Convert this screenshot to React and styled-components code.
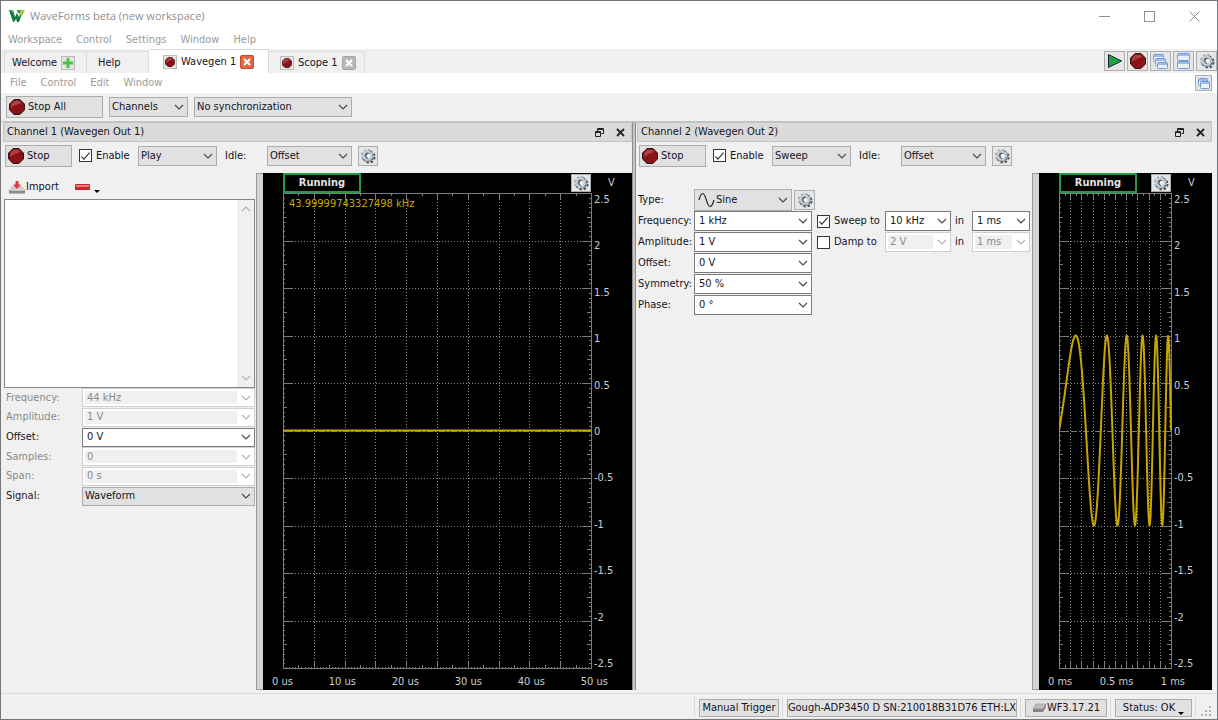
import React, { useId, useLayoutEffect, useRef, useState } from 'react';
import styled, { createGlobalStyle, css } from 'styled-components';

const GlobalStyle = createGlobalStyle`
  *, *::before, *::after { box-sizing: border-box; }
  html, body { margin: 0; background: #f0f0f0; }
  body, button, select, input {
    font-family: 'DejaVu Sans Condensed', 'DejaVu Sans', Tahoma, sans-serif;
    font-size: 11px;
    line-height: 14px;
    color: #14141c;
  }
  svg { display: block; flex: none; }
`;

/* ---------- window frame ---------- */

const Window = styled.div`
  display: flex;
  flex-direction: column;
  min-height: 100vh;
  border: 1px solid #74787b;
  background: #f0f0f0;
`;

const TitleBar = styled.header`
  display: flex;
  align-items: center;
  gap: 5px;
  height: 30px;
  padding: 0 17px 0 8px;
  background: #fff;
  color: #8f8f8f;
`;

const Title = styled.h1`
  flex: 1;
  margin: 0;
  font: 400 11px/16px 'Open Sans', 'Noto Sans', sans-serif;
`;

const WindowButtons = styled.div`
  display: flex;
  gap: 34px;
`;

const BareButton = styled.button`
  display: flex;
  align-items: center;
  padding: 0;
  border: 0;
  background: none;
`;

const MenuBar = styled.nav`
  display: flex;
  align-items: center;
  gap: 14px;
  flex: 1;
  height: ${(p) => p.$h}px;
  padding-left: ${(p) => p.$indent}px;
`;

const MenuItem = styled.button`
  padding: 0;
  border: 0;
  background: none;
  color: #9c9c9c;
`;

const MenuStrip = styled.div`
  display: flex;
  align-items: center;
  padding-right: 5px;
  background: #fff;
`;

const TabBar = styled.div`
  display: flex;
  align-items: flex-end;
  height: 24px;
  padding-left: 3px;
`;

const Tabs = styled.div`
  display: flex;
  align-items: flex-end;
  flex: 1;
`;

const Tab = styled.div`
  display: flex;
  align-items: center;
  gap: 4px;
  width: ${(p) => p.$width}px;
  height: ${(p) => (p.$active ? 24 : 22)}px;
  padding-left: ${(p) => p.$pad}px;
  border: 1px solid #dcdcdc;
  border-bottom: 0;
  border-left-width: ${(p) => (p.$first ? 1 : 0)}px;
  background: ${(p) => (p.$active ? '#fff' : '#f0f0f0')};
`;

const TabLabel = styled.button`
  padding: 0;
  border: 0;
  background: none;
`;

const IconFrame = styled.span`
  display: flex;
  align-items: center;
  justify-content: center;
  width: 14px;
  height: 14px;
  border: 1px solid #bcbcbc;
  background: #e6e6e6;
`;

const TabClose = styled.button`
  display: flex;
  align-items: center;
  justify-content: center;
  width: 14px;
  height: 14px;
  padding: 0;
  border: 1px solid ${(p) => (p.$active ? '#c9442a' : '#a4a4a4')};
  border-radius: 2px;
  background: ${(p) => (p.$active ? '#e4683f' : '#b9b9b9')};
`;

const ToolButtons = styled.div`
  display: flex;
  gap: 2px;
  align-self: center;
`;

const IconButton = styled.button`
  display: flex;
  align-items: center;
  justify-content: center;
  flex: none;
  width: ${(p) => p.$w || 21}px;
  height: ${(p) => p.$h || 20}px;
  padding: 0;
  border: 1px solid #adadad;
  background: #e6e6e6;
`;

/* ---------- controls ---------- */

const PushButton = styled.button`
  display: flex;
  align-items: center;
  gap: 3px;
  width: ${(p) => p.$w}px;
  height: 22px;
  padding: 0 2px;
  border: 1px solid #adadad;
  background: #e1e1e1;
`;

const ComboBox = styled.div`
  position: relative;
  width: ${(p) => (p.$w ? `${p.$w}px` : 'auto')};
  height: ${(p) => p.$h || 20}px;
`;

const NativeSelect = styled.select`
  display: block;
  appearance: none;
  width: 100%;
  height: 100%;
  margin: 0;
  padding: 0 18px 0 ${(p) => p.$pad}px;
  border: 1px solid #adadad;
  border-radius: 0;
  background: #e1e1e1;
  ${(p) =>
    p.$editable &&
    css`
      border-color: #7a7a7a;
      background: #fff;
    `}
  &:disabled {
    opacity: 1;
    color: #8a8a8a;
    border-color: #cfcfcf;
    background: linear-gradient(#f0f0f0, #f0f0f0) 2px 2px / calc(100% - 19px) calc(100% - 4px) no-repeat #fff;
  }
`;

const ComboArrow = styled.span`
  position: absolute;
  top: 0;
  bottom: 0;
  right: 4px;
  display: flex;
  align-items: center;
  pointer-events: none;
`;

const ComboGlyph = styled.span`
  position: absolute;
  top: 0;
  bottom: 0;
  left: 4px;
  display: flex;
  align-items: center;
  pointer-events: none;
`;

const CheckLabel = styled.label`
  display: flex;
  align-items: center;
  gap: 4px;
`;

const CheckInput = styled.input`
  appearance: none;
  display: grid;
  place-items: center;
  flex: none;
  width: 13px;
  height: 13px;
  margin: 0;
  border: 1px solid #333;
  background: #fff;
  &:checked::before {
    content: '';
    width: 9px;
    height: 4px;
    border: solid #222;
    border-width: 0 0 1px 1px;
    transform: translateY(-1px) rotate(-48deg);
  }
`;

/* ---------- docks ---------- */

const ToolRow = styled.div`
  display: flex;
  align-items: center;
  height: 28px;
  padding-left: 5px;
  gap: 6px;
`;

const Workspace = styled.main`
  display: flex;
  flex: 1;
  margin-right: 5px;
  padding-left: 2px;
  border-top: 1px solid #c2c2c2;
`;

const Dock = styled.section`
  display: flex;
  flex-direction: column;
  flex: ${(p) => p.$grow} 1 0;
  min-width: 0;
`;

const DockSplitter = styled.div`
  flex: none;
  width: 4px;
  border: 1px solid #8e8e8e;
  border-width: 0 1px;
  margin-right: 1px;
  background: #c4c4c4;
`;

const DockTitle = styled.header`
  display: flex;
  align-items: center;
  gap: 12px;
  height: 20px;
  padding: 0 6px 0 3px;
  border: 1px solid #c4c4c4;
  background: #dadada;
`;

const DockName = styled.h2`
  flex: 1;
  margin: 0;
  font-size: 11px;
  font-weight: 400;
`;

const DockTools = styled.div`
  display: flex;
  align-items: center;
  height: 31px;
  padding: 0 0 4px 2px;
`;

const EnableSlot = styled.div`
  width: 59px;
  margin-left: 7px;
`;

const IdleLabel = styled.label`
  width: 42px;
  margin-left: 8px;
`;

const GearSlot = styled.div`
  margin-left: 6px;
`;

const DockBody = styled.div`
  display: flex;
  flex: 1;
`;

const PaneSplitter = styled.div`
  flex: none;
  width: 7px;
  border: 1px solid #9c9c9c;
  border-right-width: 0;
  background: #d2d2d2;
`;

/* ---------- player pane ---------- */

const PlayerPane = styled.div`
  display: flex;
  flex-direction: column;
  flex: none;
  width: 253px;
  padding: 0 1px;
`;

const ImportRow = styled.div`
  display: flex;
  align-items: center;
  gap: 16px;
  height: 26px;
  padding: 2px 0 0 5px;
`;

const FlatButton = styled.button`
  display: flex;
  align-items: center;
  gap: 1px;
  height: 14px;
  padding: 0;
  border: 0;
  background: none;
`;

const DropMark = styled.span`
  align-self: flex-end;
  width: 0;
  height: 0;
  margin: 0 0 1px 3px;
  border: 3px solid transparent;
  border-top-color: #000;
  border-bottom-width: 0;
`;

const ListBox = styled.div`
  display: flex;
  justify-content: flex-end;
  height: 189px;
  border: 1px solid #828790;
  background: #fff;
`;

const ScrollTrack = styled.div`
  display: flex;
  flex-direction: column;
  justify-content: space-between;
  align-items: center;
  width: 17px;
  padding: 6px 0;
  background: #f0f0f0;
`;

const PlayerFields = styled.div`
  display: grid;
  grid-template-columns: 78px 1fr;
  grid-auto-rows: 1fr;
  align-items: center;
  height: 118px;
`;

const FieldLabel = styled.label`
  padding-left: ${(p) => p.$pad || 0}px;
  color: ${(p) => (p.$muted ? '#8a8a8a' : 'inherit')};
`;

/* ---------- sweep pane ---------- */

const SweepPane = styled.div`
  flex: 1;
  min-width: 0;
  padding: 15px 2px 0 1px;
`;

const TypeRow = styled.div`
  display: flex;
  align-items: center;
  height: 23px;
`;

const TypeLabel = styled.label`
  width: 56px;
`;

const TypeGear = styled.div`
  margin-left: 2px;
`;

const SweepFields = styled.div`
  display: grid;
  grid-template-columns: 56px 118px 73px 66px 21px 58px;
  grid-auto-rows: 1fr;
  align-items: center;
  height: 104px;
`;

const CheckCell = styled.div`
  padding-left: 5px;
`;

const InWord = styled.span`
  padding-left: 4px;
`;

const RowEnd = styled.span`
  grid-column: 3 / -1;
`;

/* ---------- scope ---------- */

const ScopePane = styled.div`
  display: flex;
  flex-direction: column;
  width: ${(p) => (p.$w ? `${p.$w}px` : 'auto')};
  flex: ${(p) => (p.$w ? 'none' : '1')};
  min-width: 0;
  background: #000;
  color: #c9ced3;
`;

const ScopeHead = styled.div`
  display: flex;
  align-items: center;
  height: 20px;
  padding-left: 20px;
`;

const RunState = styled.output`
  display: flex;
  align-items: center;
  justify-content: center;
  width: 78px;
  height: 20px;
  border: 2px solid #1f9a48;
  font-weight: 700;
  color: #e4e4e4;
`;

const HeadSpace = styled.span`
  flex: 1;
`;

const Unit = styled.span`
  width: 41px;
  text-align: center;
`;

const ScopeMain = styled.div`
  display: flex;
  flex: 1;
  padding-left: 20px;
`;

const PlotArea = styled.div`
  position: relative;
  flex: 1;
  min-width: 0;
`;

const PlotCanvas = styled.svg`
  position: absolute;
  inset: 0;
  width: 100%;
  height: 100%;
`;

const Readout = styled.span`
  position: absolute;
  top: 4px;
  left: 6px;
  color: #c8a800;
`;

const VoltAxis = styled.div`
  display: flex;
  flex-direction: column;
  justify-content: space-between;
  width: 40px;
  padding-left: 2px;
  line-height: 13px;
`;

const TimeAxis = styled.div`
  display: flex;
  justify-content: space-between;
  height: 20px;
  padding: 5px ${(p) => p.$right}px 0 9px;
`;

/* ---------- status bar ---------- */

const StatusBar = styled.footer`
  display: flex;
  align-items: center;
  justify-content: flex-end;
  gap: 2px;
  height: 26px;
  margin-top: 3px;
  border-top: 1px solid #dcdcdc;
`;

const StatusCell = styled.div`
  display: flex;
  align-items: center;
  height: 20px;
  padding: 2px 1px 0 4px;
  border-left: 1px solid #dadada;
`;

const StatusButton = styled.button`
  display: flex;
  align-items: center;
  justify-content: center;
  width: ${(p) => p.$w}px;
  height: 18px;
  padding: 0;
  white-space: nowrap;
  border: 1px solid #adadad;
  background: #e1e1e1;
`;

const GripSlot = styled.div`
  display: flex;
  align-items: flex-end;
  width: 22px;
  height: 20px;
  padding-left: 5px;
  border-left: 1px solid #dadada;
`;

/* ---------- icons ---------- */

const Logo = () => (
  <svg width="16" height="14" viewBox="0 0 16 14">
    <path d="M0 1h4l2 7 2-4 2 4 1-3 2 0-3 8h-2l-1-3-2 3H4z" fill="#157a3c" />
    <path d="M8 1h4l-1 4-2-1z" fill="#2f9a44" />
    <path d="M12 1h4l-3 6-2-1z" fill="#a6c63a" />
    <path d="M1 1h3l1 4z" fill="#5fb04a" />
  </svg>
);

const StopIcon = ({ size = 16 }) => (
  <svg width={size} height={size} viewBox="0 0 16 16">
    <path d="M5 .6h6L15.4 5v6L11 15.4H5L.6 11V5z" fill="#8c1218" stroke="#1c0c0c" strokeWidth="1" />
    <path d="M5.400 1.800h4.800l2 2C10 5 4.600 6 2.200 9.500V5.200z" fill="#c4696c" opacity=".55" />
  </svg>
);

const RunIcon = () => (
  <svg width="16" height="16" viewBox="0 0 16 16">
    <path d="M1.500 1.500L14.500 8L1.500 14.500z" fill="#23a045" stroke="#123" strokeWidth="1" />
  </svg>
);

const GearIcon = () => (
  <svg width="16" height="16" viewBox="0 0 16 16">
    <g fill="none">
      <circle cx="9" cy="9" r="5.500" stroke="#46535d" strokeWidth="2" strokeDasharray="2.400 1.920" />
      <circle cx="8.500" cy="8.500" r="4" stroke="#5c6a75" strokeWidth="2.600" />
      <circle cx="7.500" cy="7.500" r="5.500" stroke="#98a4ad" strokeWidth="2" strokeDasharray="2.400 1.920" />
      <circle cx="7.500" cy="7.500" r="4" stroke="#c3ccd2" strokeWidth="2.600" />
      <path d="M8 5a3 3 0 0 0 0 5.500" stroke="#46535d" strokeWidth="1.200" />
    </g>
    <circle cx="8.500" cy="8" r="2" fill="#f3f5f6" />
  </svg>
);

const Pane = ({ x, y, w = 10, h = 7 }) => (
  <g>
    <rect x={x + 0.5} y={y + 0.5} width={w} height={h} rx="1" fill="#e9f1fb" stroke="#6f9bd6" />
    <rect x={x + 1} y={y + 1} width={w - 1} height="2" fill="#9cbdea" />
  </g>
);

const CascadeIcon = () => (
  <svg width="17" height="17" viewBox="0 0 17 17">
    <Pane x={1} y={1} />
    <Pane x={3} y={5} />
    <Pane x={5} y={9} h={6} />
  </svg>
);

const TileIcon = () => (
  <svg width="14" height="16" viewBox="0 0 14 16">
    <Pane x={0} y={0} w={12} h={7} />
    <Pane x={0} y={8} w={12} h={7} />
  </svg>
);

const RestoreIcon = () => (
  <svg width="14" height="13" viewBox="0 0 14 13">
    <Pane x={1} y={1} w={9} h={7} />
    <Pane x={3} y={4} w={9} h={7} />
  </svg>
);

const PlusIcon = () => (
  <svg width="12" height="12" viewBox="0 0 12 12">
    <path d="M4.500 1h3v3.500H11v3H7.500V11h-3V7.500H1v-3h3.500z" fill="#4fc04a" stroke="#8fd58a" strokeWidth=".6" />
  </svg>
);

const TabCross = () => (
  <svg width="8" height="8" viewBox="0 0 8 8">
    <path d="M1 1l6 6M7 1l-6 6" stroke="#fff" strokeWidth="2" />
  </svg>
);

const ImportIcon = () => (
  <svg width="16" height="14" viewBox="0 0 16 14">
    <path d="M3 6h10l3 4v3.500H0V10z" fill="#c9c9c9" />
    <path d="M0 10h16v3.500H0z" fill="#8c8c8c" />
    <path d="M1 10h14" stroke="#eee" />
    <path d="M6.500 1h3v3.500h2.500L8 9 4 4.500h2.500z" fill="#dd3a3f" />
  </svg>
);

const MinusIcon = () => (
  <svg width="15" height="6" viewBox="0 0 15 6">
    <rect width="15" height="6" rx="1" fill="#c9252b" />
    <rect x="1" y="1" width="13" height="2" fill="#ec7f82" />
  </svg>
);

const Chevron = ({ up, muted }) => (
  <svg width="10" height="6" viewBox="0 0 10 6">
    <path
      d={up ? 'M1 5l4-4 4 4' : 'M1 1l4 4 4-4'}
      fill="none"
      stroke={muted ? '#b4b4b4' : '#4a4a4a'}
      strokeWidth="1.200"
    />
  </svg>
);

const SineIcon = () => (
  <svg width="17" height="16" viewBox="0 0 17 16">
    <path d="M1 8C2 4 3.200 1.500 4.600 1.500C8.200 1.500 8.600 14.500 12 14.500C13.600 14.500 15 12 16 8" fill="none" stroke="#222" strokeWidth="1.200" />
  </svg>
);

const DiskIcon = () => (
  <svg width="15" height="10" viewBox="0 0 15 10">
    <path d="M4 1h10l-3 5H1z" fill="#bdbdbd" stroke="#8f8f8f" strokeWidth=".6" />
    <path d="M1 6h10v3H1zM11 6l3-5v3l-3 5z" fill="#858585" />
  </svg>
);

const FloatIcon = () => (
  <svg width="9" height="9" viewBox="0 0 9 9" fill="none" stroke="#222">
    <path d="M2.500 3V.5h6v5H6.500M2.500 1.500h6" />
    <path d="M.5 3.500h5v5h-5zM.5 4.500h5" />
  </svg>
);

const CloseIcon = () => (
  <svg width="9" height="9" viewBox="0 0 9 9">
    <path d="M1 1l7 7M8 1l-7 7" stroke="#222" strokeWidth="1.800" />
  </svg>
);

const GripIcon = () => (
  <svg width="11" height="11" viewBox="0 0 11 11" fill="#b4b4b4">
    {[[8, 0], [4, 4], [8, 4], [0, 8], [4, 8], [8, 8]].map(([x, y]) => (
      <rect key={`${x}-${y}`} x={x} y={y} width="2" height="2" />
    ))}
  </svg>
);

/* ---------- composed parts ---------- */

function Combo({ id, label, options, width, height, editable, disabled, glyph }) {
  return (
    <ComboBox $w={width} $h={height}>
      <NativeSelect id={id} aria-label={label} $editable={editable} $pad={glyph ? 21 : editable ? 4 : 2} disabled={disabled}>
        {options.map((o) => (
          <option key={o}>{o}</option>
        ))}
      </NativeSelect>
      {glyph && <ComboGlyph>{glyph}</ComboGlyph>}
      <ComboArrow>
        <Chevron muted={disabled} />
      </ComboArrow>
    </ComboBox>
  );
}

function Check({ children, checked }) {
  return (
    <CheckLabel>
      <CheckInput type="checkbox" defaultChecked={checked} />
      {children}
    </CheckLabel>
  );
}

function Menu({ items, indent, height, label }) {
  return (
    <MenuBar $indent={indent} $h={height} aria-label={label}>
      {items.map((item) => (
        <MenuItem key={item}>{item}</MenuItem>
      ))}
    </MenuBar>
  );
}

function useElementSize() {
  const ref = useRef(null);
  const [size, setSize] = useState({ width: 0, height: 0 });
  useLayoutEffect(() => {
    const node = ref.current;
    const measure = () => {
      const box = node.getBoundingClientRect();
      setSize({ width: Math.floor(box.width), height: Math.floor(box.height) });
    };
    measure();
    const observer = new ResizeObserver(measure);
    observer.observe(node);
    return () => observer.disconnect();
  }, []);
  return [ref, size];
}

const DIVISIONS = 10;
const VOLTS_PER_SPAN = 5;

const gridPositions = (length, steps) =>
  Array.from({ length: steps + 1 }, (_, i) => Math.round((i * length) / steps) + 0.5);

const tickLength = (i, perDivision, sizes) => {
  if (i % perDivision === 0) return sizes[2];
  if (i % perDivision === perDivision / 2) return sizes[1];
  return sizes[0];
};

function Plot({ signal, readout }) {
  const [ref, { width, height }] = useElementSize();
  const w = width - 1;
  const h = height - 2;
  const ready = w > 0 && h > 0;

  let grid = '';
  let ticks = '';
  let curve = '';
  if (ready) {
    gridPositions(w, DIVISIONS).slice(1, -1).forEach((x) => { grid += `M${x} 0V${h}`; });
    gridPositions(h, DIVISIONS).forEach((y, i) => {
      if (i > 0 && i < DIVISIONS && i !== DIVISIONS / 2) grid += `M0 ${y}H${w}`;
    });
    gridPositions(h, DIVISIONS * 10).forEach((y, i) => {
      const len = tickLength(i, 10, [2, 4, 9]);
      ticks += `M0 ${y}h${len}M${w} ${y}h${-len}`;
    });
    const perDivision = w > 200 ? 10 : 2;
    gridPositions(w, DIVISIONS * perDivision).forEach((x, i) => {
      const len = tickLength(i, perDivision, [1, 3, 6]);
      ticks += `M${x} 0v${len}M${x} ${h}v${-len}`;
    });
    const samples = w * 2;
    curve = Array.from({ length: samples + 1 }, (_, i) => {
      const t = i / samples;
      const y = h / 2 - (signal(t) * h) / VOLTS_PER_SPAN;
      return `${i ? 'L' : 'M'}${(t * w).toFixed(1)} ${y.toFixed(1)}`;
    }).join('');
  }
  const mid = Math.round(h / 2) + 0.5;

  return (
    <PlotArea ref={ref}>
      {ready && (
        <PlotCanvas fill="none" role="img" aria-label="Channel preview">
          <path d={grid} stroke="#8a8a8a" strokeDasharray="1 2" />
          <path d={`M0 ${mid}H${w}`} stroke="#7c7c7c" strokeDasharray="6 2 2 2" />
          <path d={ticks} stroke="#7c7c7c" />
          <rect x="0.5" y="0.5" width={w} height={h} stroke="#7c7c7c" />
          <path d={curve} stroke="#c8a400" strokeWidth="2" strokeLinejoin="round" />
        </PlotCanvas>
      )}
      {readout && <Readout>{readout}</Readout>}
    </PlotArea>
  );
}

const VOLTS = ['2.5', '2', '1.5', '1', '0.5', '0', '-0.5', '-1', '-1.5', '-2', '-2.5'];

function Scope({ width, signal, times, readout, axisEnd }) {
  return (
    <ScopePane $w={width}>
      <ScopeHead>
        <RunState>Running</RunState>
        <HeadSpace />
        <IconButton $w={20} $h={18} aria-label="Plot options">
          <GearIcon />
        </IconButton>
        <Unit>V</Unit>
      </ScopeHead>
      <ScopeMain>
        <Plot signal={signal} readout={readout} />
        <VoltAxis>
          {VOLTS.map((v) => (
            <span key={v}>{v}</span>
          ))}
        </VoltAxis>
      </ScopeMain>
      <TimeAxis $right={axisEnd}>
        {times.map((t) => (
          <span key={t}>{t}</span>
        ))}
      </TimeAxis>
    </ScopePane>
  );
}

function ChannelDock({ name, mode, grow, children }) {
  const idleId = useId();
  return (
    <Dock $grow={grow}>
      <DockTitle>
        <DockName>{name}</DockName>
        <BareButton aria-label="Float"><FloatIcon /></BareButton>
        <BareButton aria-label="Close"><CloseIcon /></BareButton>
      </DockTitle>
      <DockTools>
        <PushButton $w={67}>
          <StopIcon />
          Stop
        </PushButton>
        <EnableSlot>
          <Check checked>Enable</Check>
        </EnableSlot>
        <Combo label="Mode" options={[mode]} width={79} />
        <IdleLabel htmlFor={idleId}>Idle:</IdleLabel>
        <Combo id={idleId} options={['Offset']} width={85} />
        <GearSlot>
          <IconButton $w={20} aria-label="Channel options"><GearIcon /></IconButton>
        </GearSlot>
      </DockTools>
      <DockBody>{children}</DockBody>
    </Dock>
  );
}

const PLAYER_FIELDS = [
  ['Frequency:', '44 kHz', true],
  ['Amplitude:', '1 V', true],
  ['Offset:', '0 V', false],
  ['Samples:', '0', true],
  ['Span:', '0 s', true],
];

function Player() {
  return (
    <PlayerPane>
      <ImportRow>
        <FlatButton><ImportIcon />Import</FlatButton>
        <FlatButton aria-label="Remove"><MinusIcon /><DropMark /></FlatButton>
      </ImportRow>
      <ListBox role="listbox" aria-label="Imported files">
        <ScrollTrack>
          <Chevron up muted />
          <Chevron muted />
        </ScrollTrack>
      </ListBox>
      <PlayerFields>
        {PLAYER_FIELDS.map(([label, value, off]) => (
          <React.Fragment key={label}>
            <FieldLabel $pad={2} $muted={off} htmlFor={`play-${label}`}>{label}</FieldLabel>
            <Combo id={`play-${label}`} options={[value]} height={19} editable disabled={off} />
          </React.Fragment>
        ))}
        <FieldLabel $pad={2} htmlFor="play-signal">Signal:</FieldLabel>
        <Combo id="play-signal" options={['Waveform']} height={19} />
      </PlayerFields>
    </PlayerPane>
  );
}

const SWEEP_FIELDS = [
  ['Frequency:', '1 kHz', { text: 'Sweep to', on: true, to: '10 kHz' }],
  ['Amplitude:', '1 V', { text: 'Damp to', on: false, to: '2 V' }],
  ['Offset:', '0 V'],
  ['Symmetry:', '50 %'],
  ['Phase:', '0 °'],
];

function Sweep() {
  return (
    <SweepPane>
      <TypeRow>
        <TypeLabel htmlFor="sweep-type">Type:</TypeLabel>
        <Combo id="sweep-type" options={['Sine']} width={98} height={22} glyph={<SineIcon />} />
        <TypeGear>
          <IconButton aria-label="Type options"><GearIcon /></IconButton>
        </TypeGear>
      </TypeRow>
      <SweepFields>
        {SWEEP_FIELDS.map(([label, value, ramp]) => (
          <React.Fragment key={label}>
            <FieldLabel htmlFor={`sweep-${label}`}>{label}</FieldLabel>
            <Combo id={`sweep-${label}`} options={[value]} editable />
            {ramp ? (
              <>
                <CheckCell><Check checked={ramp.on}>{ramp.text}</Check></CheckCell>
                <Combo label={ramp.text} options={[ramp.to]} editable disabled={!ramp.on} />
                <InWord>in</InWord>
                <Combo label={`${ramp.text} time`} options={['1 ms']} editable disabled={!ramp.on} />
              </>
            ) : (
              <RowEnd />
            )}
          </React.Fragment>
        ))}
      </SweepFields>
    </SweepPane>
  );
}

const flat = () => 0;
const chirp = (t) => Math.sin(2 * Math.PI * (t + 4.5 * t * t));

export default function App() {
  return (
    <Window>
      <GlobalStyle />
      <TitleBar>
        <Logo />
        <Title>WaveForms beta (new workspace)</Title>
        <WindowButtons>
          <BareButton aria-label="Minimize">
            <svg width="11" height="11" viewBox="0 0 11 11"><path d="M0 5.500h11" stroke="#8f8f8f" /></svg>
          </BareButton>
          <BareButton aria-label="Maximize">
            <svg width="11" height="11" viewBox="0 0 11 11"><rect x=".5" y=".5" width="10" height="10" fill="none" stroke="#8f8f8f" /></svg>
          </BareButton>
          <BareButton aria-label="Close window">
            <svg width="11" height="11" viewBox="0 0 11 11"><path d="M.5.5l10 10M10.500.5l-10 10" stroke="#8f8f8f" /></svg>
          </BareButton>
        </WindowButtons>
      </TitleBar>
      <MenuStrip>
        <Menu label="Main" indent={7} height={18} items={['Workspace', 'Control', 'Settings', 'Window', 'Help']} />
      </MenuStrip>

      <TabBar>
        <Tabs>
          <Tab $width={83} $pad={7} $first>
            <TabLabel>Welcome</TabLabel>
            <IconFrame><PlusIcon /></IconFrame>
          </Tab>
          <Tab $width={62} $pad={11}><TabLabel>Help</TabLabel></Tab>
          <Tab $width={120} $pad={14} $active>
            <IconFrame><StopIcon size={10} /></IconFrame>
            <TabLabel>Wavegen 1</TabLabel>
            <TabClose $active aria-label="Close Wavegen 1"><TabCross /></TabClose>
          </Tab>
          <Tab $width={96} $pad={11}>
            <IconFrame><StopIcon size={10} /></IconFrame>
            <TabLabel>Scope 1</TabLabel>
            <TabClose aria-label="Close Scope 1"><TabCross /></TabClose>
          </Tab>
        </Tabs>
        <ToolButtons>
          <IconButton aria-label="Run all"><RunIcon /></IconButton>
          <IconButton aria-label="Stop"><StopIcon /></IconButton>
          <IconButton aria-label="Cascade windows"><CascadeIcon /></IconButton>
          <IconButton aria-label="Tile windows"><TileIcon /></IconButton>
          <IconButton aria-label="Options"><GearIcon /></IconButton>
        </ToolButtons>
      </TabBar>

      <MenuStrip>
        <Menu label="Wavegen" indent={9} height={20} items={['File', 'Control', 'Edit', 'Window']} />
        <IconButton $w={17} $h={16} aria-label="Undock"><RestoreIcon /></IconButton>
      </MenuStrip>

      <ToolRow>
        <PushButton $w={97}>
          <StopIcon />
          Stop All
        </PushButton>
        <Combo label="Channels" options={['Channels']} width={79} />
        <Combo label="Synchronization" options={['No synchronization']} width={158} />
      </ToolRow>

      <Workspace>
        <ChannelDock name="Channel 1 (Wavegen Out 1)" mode="Play" grow={629}>
          <Player />
          <PaneSplitter />
          <Scope
            signal={flat}
            readout="43.99999743327498 kHz"
            times={['0 us', '10 us', '20 us', '30 us', '40 us', '50 us']}
            axisEnd={24}
          />
        </ChannelDock>
        <DockSplitter />
        <ChannelDock name="Channel 2 (Wavegen Out 2)" mode="Sweep" grow={575}>
          <Sweep />
          <PaneSplitter />
          <Scope width={173} signal={chirp} times={['0 ms', '0.5 ms', '1 ms']} axisEnd={27} />
        </ChannelDock>
      </Workspace>

      <StatusBar>
        <StatusCell><StatusButton $w={80}>Manual Trigger</StatusButton></StatusCell>
        <StatusCell><StatusButton $w={230}>Gough-ADP3450 D SN:210018B31D76 ETH:LX</StatusButton></StatusCell>
        <StatusCell><StatusButton $w={82}><DiskIcon />WF3.17.21</StatusButton></StatusCell>
        <StatusCell><StatusButton $w={77}>Status: OK<DropMark /></StatusButton></StatusCell>
        <GripSlot><GripIcon /></GripSlot>
      </StatusBar>
    </Window>
  );
}
